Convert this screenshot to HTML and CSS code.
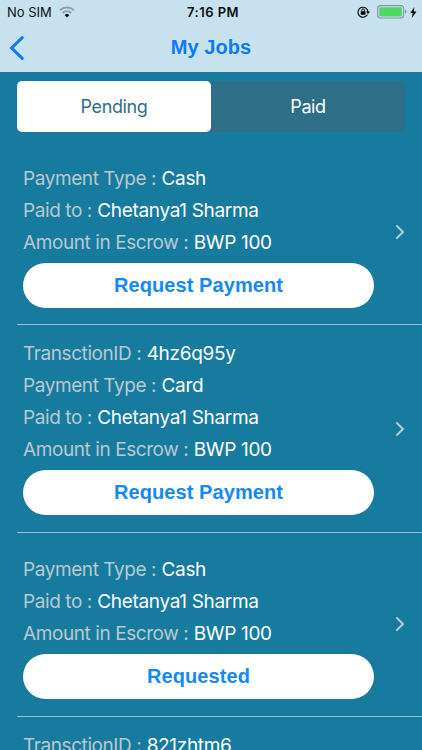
FILE: index.html
```html
<!DOCTYPE html>
<html lang="en">
<head>
    <meta charset="UTF-8">
    <meta name="viewport" content="width=device-width, initial-scale=1.0">
    <title>My Jobs</title>
    <link rel="stylesheet" href="styles.css">
</head>
<body>
    <header class="header">
        <div class="status-bar">
            <div class="carrier">
                <span>No SIM</span>
                <svg class="wifi" width="16" height="12" viewBox="0 0 16 12" fill="none">
                    <path d="M1 4.2C5 .6 11 .6 15 4.2" stroke="#8da0aa" stroke-width="1.9"/>
                    <path d="M3.6 7C6.1 4.7 9.9 4.7 12.4 7" stroke="#8da0aa" stroke-width="1.9"/>
                    <path d="M5.7 9C7 7.8 9 7.8 10.3 9L8 11.4z" fill="#000"/>
                </svg>
            </div>
            <div class="clock">7:16 PM</div>
            <div class="indicators">
                <svg width="13" height="12" viewBox="0 0 13 12" fill="none">
                    <path d="M10.4 8.6A5 5 0 1 1 11 6" stroke="#000" stroke-width="1.1"/>
                    <path d="M9 5.6h4L11 8z" fill="#000"/>
                    <rect x="3.7" y="5.3" width="4.8" height="3.4" rx=".4" fill="#000"/>
                    <path d="M4.7 5.5V4.3a1.4 1.4 0 0 1 2.8 0v1.2" stroke="#000" stroke-width="1"/>
                </svg>
                <svg width="30" height="14" viewBox="0 0 30 14">
                    <rect x=".6" y=".6" width="26" height="12.4" rx="3" fill="none" stroke="#82969f" stroke-width="1.1"/>
                    <rect x="2.2" y="2.2" width="22.8" height="9.2" rx="1.2" fill="#4cd964"/>
                    <path d="M28 4.8q1.5.6 1.5 2t-1.5 2z" fill="#82969f"/>
                </svg>
                <svg width="7" height="11" viewBox="0 0 7 11">
                    <path d="M4.4 0L.3 6h2.4L1.8 11l4.7-6.5H3.8z" fill="#000"/>
                </svg>
            </div>
        </div>
        <nav class="nav">
            <svg class="back" width="16" height="26" viewBox="0 0 16 26">
                <path d="M13.3 2.6L2.6 13l10.7 10.4" fill="none" stroke="#0b7bf5" stroke-width="3" stroke-linecap="round"/>
            </svg>
            <h1 class="title">My Jobs</h1>
        </nav>
    </header>

    <div class="tabs">
        <div class="tab active">Pending</div>
        <div class="tab">Paid</div>
    </div>

    <div class="jobs">
        <div class="job">
            <div class="details">
                <p><span class="label">Payment Type :</span> <span class="value">Cash</span></p>
                <p><span class="label">Paid to :</span> <span class="value">Chetanya1 Sharma</span></p>
                <p><span class="label">Amount in Escrow :</span> <span class="value">BWP 100</span></p>
                <button>Request Payment</button>
            </div>
            <svg class="chevron" width="10" height="16" viewBox="0 0 10 16"><path d="M1.3 1.4L8 8l-6.7 6.6"/></svg>
        </div>
        <div class="job with-id">
            <div class="details">
                <p><span class="label">TransctionID :</span> <span class="value">4hz6q95y</span></p>
                <p><span class="label">Payment Type :</span> <span class="value">Card</span></p>
                <p><span class="label">Paid to :</span> <span class="value">Chetanya1 Sharma</span></p>
                <p><span class="label">Amount in Escrow :</span> <span class="value">BWP 100</span></p>
                <button>Request Payment</button>
            </div>
            <svg class="chevron" width="10" height="16" viewBox="0 0 10 16"><path d="M1.3 1.4L8 8l-6.7 6.6"/></svg>
        </div>
        <div class="job">
            <div class="details">
                <p><span class="label">Payment Type :</span> <span class="value">Cash</span></p>
                <p><span class="label">Paid to :</span> <span class="value">Chetanya1 Sharma</span></p>
                <p><span class="label">Amount in Escrow :</span> <span class="value">BWP 100</span></p>
                <button>Requested</button>
            </div>
            <svg class="chevron" width="10" height="16" viewBox="0 0 10 16"><path d="M1.3 1.4L8 8l-6.7 6.6"/></svg>
        </div>
        <div class="job with-id">
            <div class="details">
                <p><span class="label">TransctionID :</span> <span class="value">821zhtm6</span></p>
            </div>
        </div>
    </div>
</body>
</html>
```

FILE: styles.css
```css
* {
    box-sizing: border-box;
}
html {
    overflow: hidden;
}
body {
    margin: 0;
    height: 750px;
    overflow: hidden;
    display: flex;
    flex-direction: column;
    background: #167b9f;
    font-family: Inter, "Liberation Sans", sans-serif;
}

.header {
    flex: none;
    height: 72px;
    background: #c7e2ee;
}
.status-bar {
    height: 24px;
    padding: 0 5px 0 7px;
    display: grid;
    grid-template-columns: 1fr auto 1fr;
    align-items: center;
    font-size: 13px;
    color: #0b1013;
}
.carrier {
    display: flex;
    align-items: center;
    gap: 7px;
}
.clock {
    padding-left: 2px;
    font-weight: 600;
    font-size: 13px;
    letter-spacing: 0.45px;
}
.indicators {
    display: flex;
    align-items: center;
    justify-content: flex-end;
    gap: 3px;
}
.indicators svg:first-child {
    margin-right: 4px;
}
.nav {
    height: 48px;
    padding: 0 9px;
    display: grid;
    grid-template-columns: 1fr auto 1fr;
    align-items: center;
}
.title {
    margin: 0;
    padding-bottom: 1px;
    font: bold 20px "Liberation Sans", sans-serif;
    letter-spacing: 0.1px;
    color: #0b7bf5;
}

.tabs {
    flex: none;
    display: flex;
    height: 51px;
    margin: 9px 17px 0;
    background: #2e6e87;
    border-radius: 5px;
}
.tab {
    flex: 1;
    display: flex;
    align-items: center;
    justify-content: center;
    font-size: 18px;
    letter-spacing: -0.4px;
    color: #fff;
}
.tab.active {
    background: #fff;
    color: #2e6e87;
    border-radius: 5px;
}

.jobs {
    flex: 1;
    min-height: 0;
    overflow: hidden;
    margin: 9px 0 0 17px;
}
.job {
    display: flex;
    align-items: flex-start;
    justify-content: space-between;
    height: 184px;
    padding: 21px 17px 0 6px;
    border-bottom: 1px solid #8fc3d6;
}
.job.with-id {
    height: 207.5px;
    padding-top: 12px;
}
.details {
    width: 351px;
}
.details p {
    margin: 0;
    height: 32px;
    line-height: 33px;
    font-size: 19px;
    white-space: nowrap;
}
.label {
    color: #b9c9d0;
    letter-spacing: -0.42px;
}
.value {
    color: #fff;
    letter-spacing: -0.32px;
}
.details button {
    display: block;
    width: 100%;
    height: 45px;
    margin-top: 4.5px;
    padding: 0;
    border: none;
    border-radius: 23px;
    background: #fff;
    color: #1489f5;
    font: bold 20px "Liberation Sans", sans-serif;
    letter-spacing: 0.08px;
}
.job:nth-child(3) p {
    line-height: 32px;
}
.chevron {
    align-self: center;
    margin-bottom: 22px;
}
.with-id .chevron {
    margin-bottom: 11px;
}
.chevron path {
    fill: none;
    stroke: #b9ced7;
    stroke-width: 2;
}
```
